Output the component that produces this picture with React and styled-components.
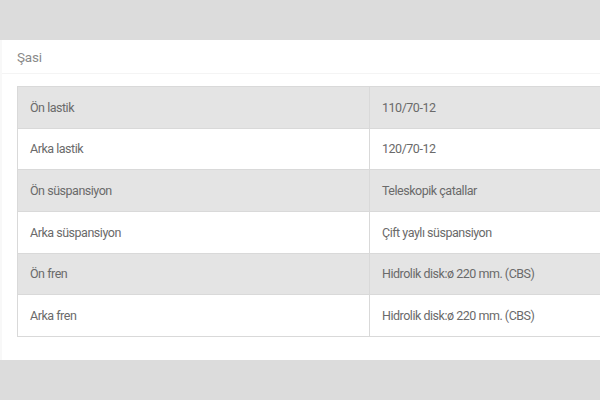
import React from "react";
import styled, { createGlobalStyle } from "styled-components";

const Global = createGlobalStyle`
  html, body { margin: 0; padding: 0; background: #dcdcdc; }
  body { font-family: Roboto, "Liberation Sans", Arial, sans-serif; }
`;

const Page = styled.div`
  width: 600px;
  height: 400px;
  padding-top: 40px;
  box-sizing: border-box;
  overflow: hidden;
`;

const Panel = styled.section`
  background: #fff;
  height: 320px;
  border-left: 2px solid #f8f8f8;
  box-sizing: border-box;
  overflow: hidden;
`;

const Header = styled.h3`
  margin: 0;
  height: 33px;
  padding-left: 15px;
  display: flex;
  align-items: center;
  font-weight: 400;
  font-size: 13.5px;
  letter-spacing: -0.2px;
  color: #8a8a8a;
  border-bottom: 1px solid #f4f4f4;
`;

const Body = styled.div`
  padding: 12px 0 0 15px;
`;

const Table = styled.table`
  width: 704px;
  border-collapse: collapse;
  table-layout: fixed;
  border: 1px solid #d9d9d9;
`;

const Row = styled.tr`
  height: 41.67px;
  background: ${(p) => (p.$shaded ? "#e4e4e4" : "#fff")};
`;

const Cell = styled.td`
  box-sizing: border-box;
  padding: 0 12px;
  font-size: 12.5px;
  letter-spacing: -0.48px;
  color: #6a6a6a;
  border-bottom: 1px solid #d9d9d9;
  border-right: 1px solid #d9d9d9;
  vertical-align: middle;
  &:first-child { width: 352px; }
`;

const rows = [
  ["Ön lastik", "110/70-12"],
  ["Arka lastik", "120/70-12"],
  ["Ön süspansiyon", "Teleskopik çatallar"],
  ["Arka süspansiyon", "Çift yaylı süspansiyon"],
  ["Ön fren", "Hidrolik disk:ø 220 mm. (CBS)"],
  ["Arka fren", "Hidrolik disk:ø 220 mm. (CBS)"],
];

export default function App() {
  return (
    <Page>
      <Global />
      <Panel>
        <Header>Şasi</Header>
        <Body>
          <Table>
            <tbody>
              {rows.map(([k, v], i) => (
                <Row key={k} $shaded={i % 2 === 0}>
                  <Cell>{k}</Cell>
                  <Cell>{v}</Cell>
                </Row>
              ))}
            </tbody>
          </Table>
        </Body>
      </Panel>
    </Page>
  );
}
